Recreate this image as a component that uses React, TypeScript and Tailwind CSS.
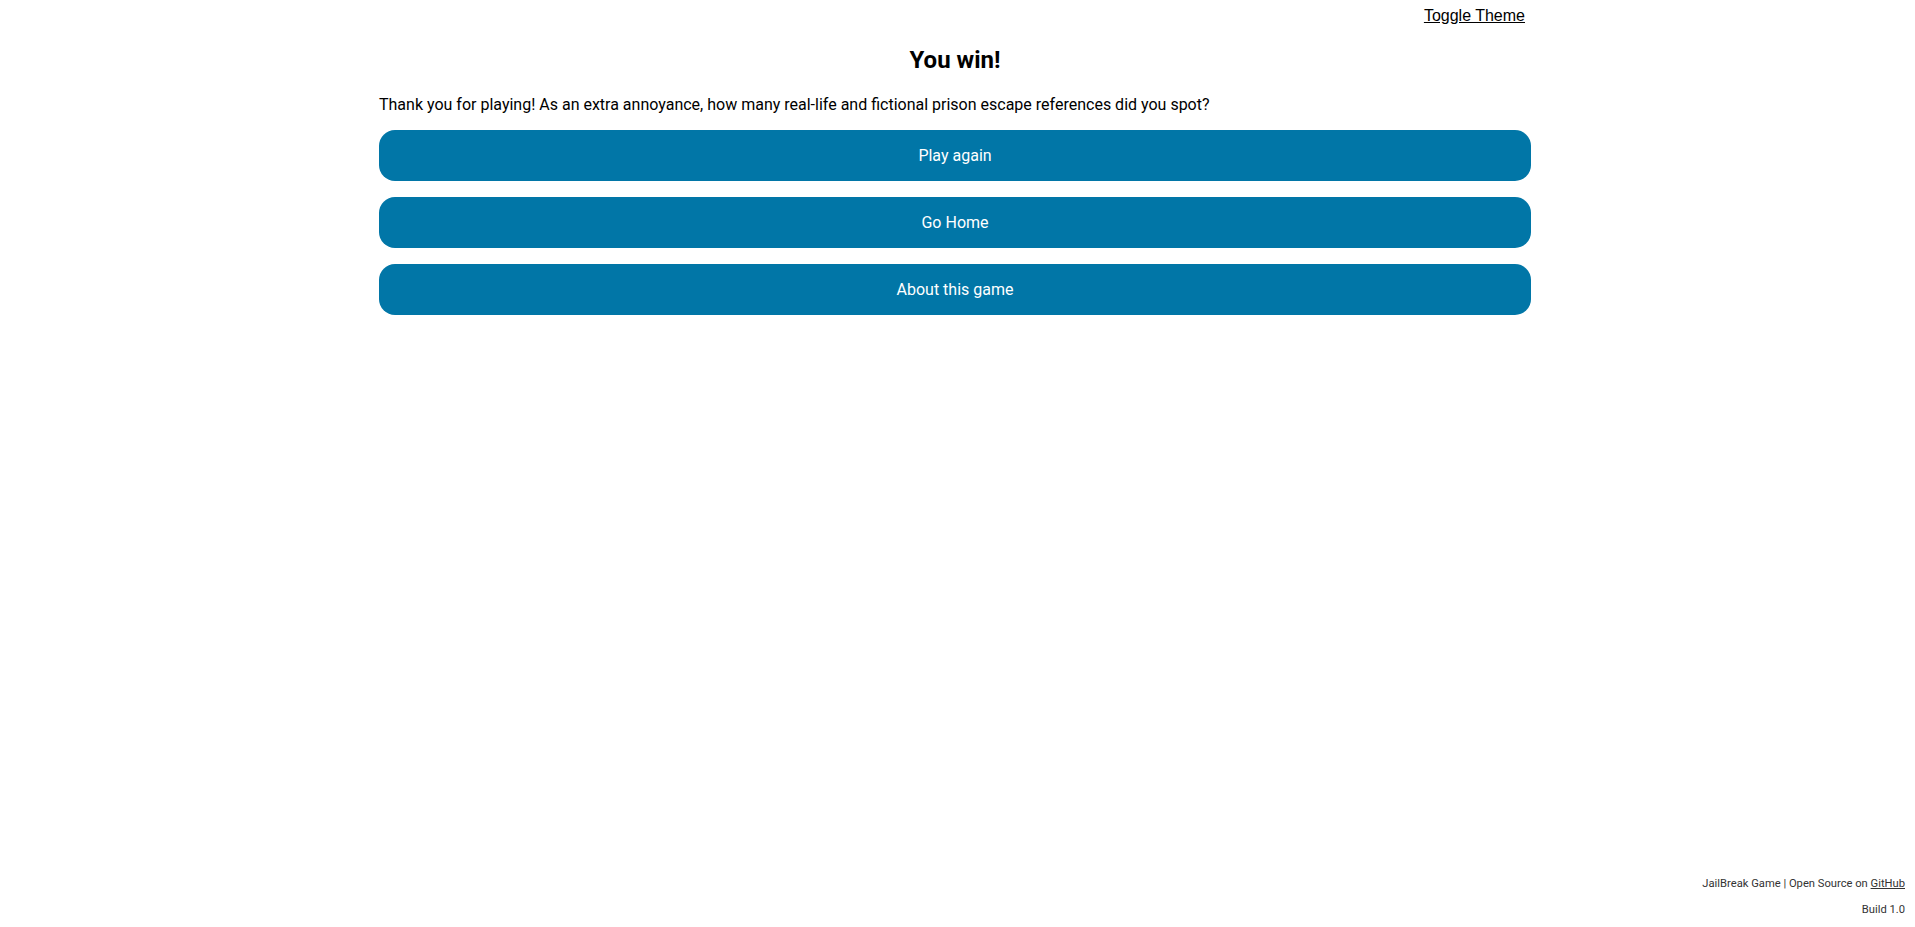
import React from 'react';

const buttons = ['Play again', 'Go Home', 'About this game'];

const App = () => {
    return (
        <div className="flex flex-col min-h-screen bg-white text-black font-['Roboto',_'Liberation_Sans',_sans-serif]">
            <div className="pr-[5px]">
                <main className="w-[1152px] mx-auto flex flex-col">
                    <div className="flex justify-end pt-[7px] pr-[6px]">
                        <button className="font-['Liberation_Sans',_Arial,_sans-serif] text-[16px] leading-[18px] underline cursor-pointer">
                            Toggle Theme
                        </button>
                    </div>

                    <h2 className="mt-[21px] text-center text-[24px] leading-[28px] font-bold">You win!</h2>

                    <p className="mt-[21px] text-[16px] leading-[19px]">
                        Thank you for playing! As an extra annoyance, how many real-life and fictional prison escape references did you spot?
                    </p>

                    <div className="mt-4 flex flex-col gap-4">
                        {buttons.map((label) => (
                            <button
                                key={label}
                                className="h-[51px] w-full rounded-2xl bg-[#0176a7] text-white text-[16px] cursor-pointer hover:bg-[#02668f]"
                            >
                                {label}
                            </button>
                        ))}
                    </div>
                </main>
            </div>

            <footer className="mt-auto flex flex-col items-end gap-[13px] pr-[10px] pb-[11px] text-[11.2px] leading-[13px] text-[#333]">
                <p>
                    JailBreak Game | Open Source on <a href="#" className="underline">GitHub</a>
                </p>
                <p>Build 1.0</p>
            </footer>
        </div>
    );
};

export default App;
